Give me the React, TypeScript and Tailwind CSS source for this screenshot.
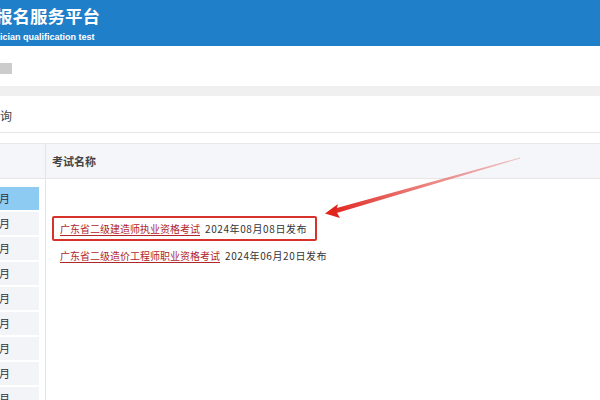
import React from "react";

const months = [0, 1, 2, 3, 4, 5, 6, 7, 8];

export default function App() {
  return (
    <div
      className="relative w-[600px] h-[400px] overflow-hidden bg-white"
      style={{ fontFamily: '"Noto Sans CJK SC", "Liberation Sans", sans-serif' }}
    >
      {/* header */}
      <div className="h-[46px] bg-[#1f80c9] text-white overflow-hidden">
        <div className="ml-[-5px] pt-[5px] text-[17.5px] leading-[22px] font-bold whitespace-nowrap">报名服务平台</div>
        <div
          className="mt-[5px] text-[9px] leading-[11px] font-bold whitespace-nowrap"
          style={{ fontFamily: '"Liberation Sans", Arial, sans-serif' }}
        >
          ician qualification test
        </div>
      </div>
      {/* nav bar */}
      <div className="h-[40px] pt-[17px]">
        <div className="w-[12px] h-[11px] bg-[#cccccc]" />
      </div>
      <div className="h-[10px] bg-[#f0f0f0]" />
      {/* title row */}
      <div className="h-[37px] border-b border-[#e6e6e6] flex items-center overflow-hidden pt-[3px]">
        <span className="ml-[-12px] text-[12px] text-[#444] whitespace-nowrap">查询</span>
      </div>
      <div className="h-[10px]" />
      {/* table */}
      <div className="border-t border-[#e8e8e8]">
        <div className="flex h-[35px] bg-[#f5f6f9] border-b border-[#e6e6e6]">
          <div className="w-[46px] border-r border-[#e3e3e3]" />
          <div className="flex items-center pl-[6px] text-[11px] font-bold text-[#444]">考试名称</div>
        </div>
        <div className="flex">
          <div className="w-[46px] border-r border-[#e3e3e3] pt-[8px] h-[240px]">
            {months.map((m) => (
              <div
                key={m}
                className={`w-[39px] h-[23px] mb-[2px] flex items-center text-[11px] text-[#333] overflow-hidden ${
                  m === 0 ? "bg-[#8ecbf2]" : "bg-[#f2f4f8]"
                }`}
              >
                <span className="ml-[-1px]">月</span>
              </div>
            ))}
          </div>
          <div className="pl-[6px] pt-[37px] flex flex-col text-[10px]">
            <div className="w-[265px] h-[25px] border-2 border-[#d8322c] rounded-[2px] flex items-center pl-[6px] whitespace-nowrap">
              <span className="text-[#b0262a] underline underline-offset-2">广东省二级建造师执业资格考试 </span>
              <span className="ml-[5px] text-[#333] tracking-[0.6px]">2024年08月08日发布</span>
            </div>
            <div className="h-[25px] mt-[2px] border-2 border-transparent flex items-center pl-[6px] whitespace-nowrap">
              <span className="text-[#b0262a] underline underline-offset-2">广东省二级造价工程师职业资格考试 </span>
              <span className="ml-[5px] text-[#333] tracking-[0.6px]">2024年06月20日发布</span>
            </div>
          </div>
        </div>
      </div>
      {/* arrow */}
      <svg className="absolute left-0 top-0 pointer-events-none" width="600" height="400">
        <defs>
          <linearGradient id="ag" x1="520" y1="158" x2="330" y2="212" gradientUnits="userSpaceOnUse">
            <stop offset="0" stopColor="#e88a8a" stopOpacity="0.5" />
            <stop offset="1" stopColor="#e0241c" />
          </linearGradient>
        </defs>
        <polygon points="520,157.6 520,158.4 335,213.6 334,208.8" fill="url(#ag)" />
        <polygon points="325,213.5 338,204 336,211 340,218" fill="#e0241c" />
      </svg>
    </div>
  );
}
